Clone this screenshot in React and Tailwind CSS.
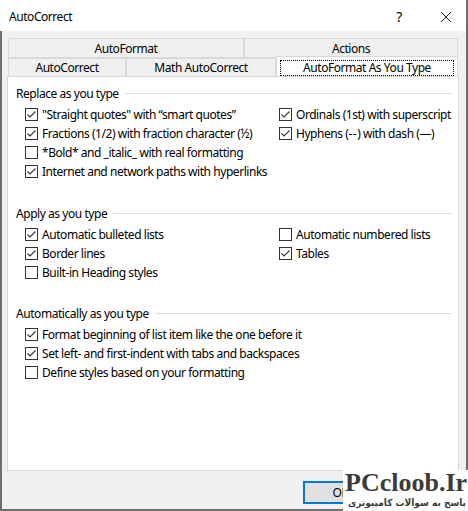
import React from "react";

const FONT = { fontFamily: '"Noto Sans", "Open Sans", sans-serif' };

function Box({ checked }) {
  return (
    <span className="w-[13px] h-[13px] shrink-0 border border-[#333333] bg-white flex items-center justify-center">
      {checked && (
        <svg width="11" height="11" viewBox="0 0 11 11">
          <polyline points="1.5,5.5 4,8 9.5,2.5" fill="none" stroke="#333333" strokeWidth="1.1" />
        </svg>
      )}
    </span>
  );
}

function Check({ checked, label }) {
  return (
    <div className="flex items-center gap-[4px] h-[19px] whitespace-nowrap">
      <Box checked={checked} />
      <span>{label}</span>
    </div>
  );
}

function Heading({ children }) {
  return (
    <div className="flex items-center h-[19px] gap-[6px] pr-[6px]">
      <span className="whitespace-nowrap">{children}</span>
      <span className="flex-1 h-px bg-[#dcdcdc]" />
    </div>
  );
}

function Row({ left, right }) {
  return (
    <div className="grid grid-cols-[254px_1fr] pl-[9px]">
      <div>{left && <Check {...left} />}</div>
      <div>{right && <Check {...right} />}</div>
    </div>
  );
}

function Tab({ w, h, top, children, selected }) {
  if (selected) {
    return (
      <div
        className="h-[21px] bg-white border border-b-0 border-[#d9d9d9] flex items-center justify-center px-[3px] pt-[1px]"
        style={{ width: w }}
      >
        <span className="w-full h-[16px] border border-dotted border-black flex items-center justify-center">
          {children}
        </span>
      </div>
    );
  }
  return (
    <div
      className={
        "bg-[#f0f0f0] border border-[#d9d9d9] flex items-center justify-center" + (top ? " pt-[2px]" : "")
      }
      style={{ width: w, height: h }}
    >
      {children}
    </div>
  );
}

export default function App() {
  return (
    <div
      className="relative w-[468px] h-[511px] bg-[#f0f0f0] text-[12px] tracking-[-0.45px] text-black overflow-hidden flex flex-col"
      style={FONT}
    >
      {/* title bar */}
      <div className="h-[31px] bg-white flex items-center pl-[9px] pr-[14px] pt-[2px] border-r-2 border-[#6e6e6e]">
        <span className="flex-1">AutoCorrect</span>
        <span className="text-[14px] mr-[38px]">?</span>
        <svg width="12" height="12" viewBox="0 0 12 12">
          <path d="M1 1 L11 11 M11 1 L1 11" stroke="#222" strokeWidth="1" />
        </svg>
      </div>

      <div className="flex-1 flex flex-col border-l-2 border-r-2 border-b-2 border-[#6e6e6e]">
        {/* tabs */}
        <div className="pl-[6px] pt-[7px]">
          <div className="flex">
            <Tab w={236} h={20} top>AutoFormat</Tab>
            <Tab w={214} h={20} top>Actions</Tab>
          </div>
          <div className="flex items-end -mt-[2px]">
            <Tab w={118} h={19}>AutoCorrect</Tab>
            <Tab w={150} h={19}>Math AutoCorrect</Tab>
            <Tab w={182} selected>
              AutoFormat As You Type
            </Tab>
          </div>
        </div>

        {/* page */}
        <div className="ml-[5px] w-[452px] h-[395px] -mt-px bg-white border border-[#d9d9d9] pt-[7px] pl-[8px]">
          <Heading>Replace as you type</Heading>
          <div className="mt-[2px]">
            <Row
              left={{ checked: true, label: "\"Straight quotes\" with \u201Csmart quotes\u201D" }}
              right={{ checked: true, label: "Ordinals (1st) with superscript" }}
            />
            <Row
              left={{ checked: true, label: "Fractions (1/2) with fraction character (\u00BD)" }}
              right={{
                checked: true,
                label: (
                  <>
                    Hyphens (<span className="tracking-[0.5px]">--</span>) with dash ({"\u2014"})
                  </>
                ),
              }}
            />
            <Row left={{ checked: false, label: "*Bold* and _italic_ with real formatting" }} />
            <Row left={{ checked: true, label: "Internet and network paths with hyperlinks" }} />
          </div>

          <div className="mt-[23px]">
            <Heading>Apply as you type</Heading>
          </div>
          <div className="mt-[2px]">
            <Row
              left={{ checked: true, label: "Automatic bulleted lists" }}
              right={{ checked: false, label: "Automatic numbered lists" }}
            />
            <Row
              left={{ checked: true, label: "Border lines" }}
              right={{ checked: true, label: "Tables" }}
            />
            <Row left={{ checked: false, label: "Built-in Heading styles" }} />
          </div>

          <div className="mt-[22px]">
            <Heading>Automatically as you type</Heading>
          </div>
          <div className="mt-[2px]">
            <Row left={{ checked: true, label: "Format beginning of list item like the one before it" }} />
            <Row left={{ checked: true, label: "Set left- and first-indent with tabs and backspaces" }} />
            <Row left={{ checked: false, label: "Define styles based on your formatting" }} />
          </div>
        </div>

        {/* buttons */}
        <div className="flex pl-[301px] pt-[10px]">
          <button className="w-[75px] h-[23px] bg-[#e1e1e1] border-2 border-[#0078d7] flex items-center justify-center">
            OK
          </button>
        </div>
      </div>

      {/* site stamp over the corner */}
      <div className="absolute left-[343px] top-[470px] w-[125px] h-[41px] bg-white flex flex-col tracking-normal overflow-hidden">
        <span
          className="pl-[2px] text-[26px] leading-[26px] font-bold text-[#3b3b3b]"
          style={{ fontFamily: '"Liberation Serif", serif' }}
        >
          PCcloob.Ir
        </span>
        <span
          dir="rtl"
          className="pr-[2px] text-[10px] leading-[14px] font-bold text-[#3b3b3b] whitespace-nowrap"
          style={{ fontFamily: '"DejaVu Sans Condensed", "DejaVu Sans", sans-serif' }}
        >
          پاسخ به سوالات کامپیوتری
        </span>
      </div>
    </div>
  );
}
